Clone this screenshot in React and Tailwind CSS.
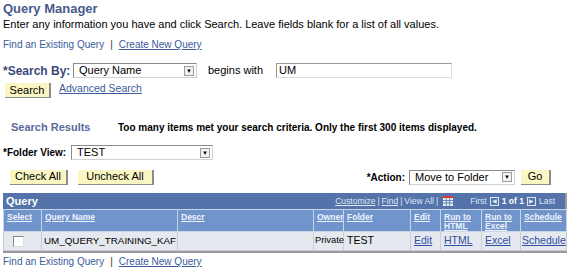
import React from 'react';

const font = { fontFamily: '"Liberation Sans", Arial, sans-serif' };

function Select({ value, width }) {
  return (
    <div
      className="flex items-center h-[15px] bg-white border border-[#8a8a8a] border-b-[#d0d0d0] border-r-[#d0d0d0] pl-[5px] pr-[2px]"
      style={{ width }}
    >
      <span className="flex-1 text-[11px] leading-[13px] text-black whitespace-nowrap">{value}</span>
      <span className="flex items-center justify-center w-[10px] h-[10px] border border-[#9a9a9a] bg-[#f4f4f4] text-[6px] leading-none text-black">
        ▼
      </span>
    </div>
  );
}

function Btn({ children, w }) {
  return (
    <div
      className="flex items-center justify-center h-[15px] bg-[#fbf7c4] border-r-2 border-b border-[#8c8c8c] text-[11px] leading-none text-black whitespace-nowrap"
      style={{ width: w }}
    >
      {children}
    </div>
  );
}

const cols = [
  { label: 'Select', w: 38 },
  { label: 'Query Name', w: 136 },
  { label: 'Descr', w: 136 },
  { label: 'Owner', w: 30 },
  { label: 'Folder', w: 67 },
  { label: 'Edit', w: 30 },
  { label: ['Run to', 'HTML'], w: 41 },
  { label: ['Run to', 'Excel'], w: 39 },
  { label: 'Schedule', w: 46 },
];

function Links() {
  return (
    <div className="text-[10px] leading-[13px] flex items-center">
      <span className="text-[#3b5a9a]">Find an Existing Query</span>
      <span className="mx-[6px] text-[#333]">|</span>
      <span className="text-[#3b5a9a] underline">Create New Query</span>
    </div>
  );
}

export default function App() {
  return (
    <div className="w-[570px] h-[268px] bg-white overflow-hidden text-black" style={font}>
      <div className="pl-[3px] pt-[1px]">
        <div className="text-[13px] leading-[15px] font-bold text-[#4b5a8c]">Query Manager</div>
        <div className="mt-[2px] text-[11px] leading-[13px]">
          Enter any information you have and click Search. Leave fields blank for a list of all values.
        </div>
        <div className="mt-[7px]">
          <Links />
        </div>

        <div className="mt-[11px] flex items-center h-[17px]">
          <span className="text-[12px] font-bold text-[#3b4a7c] w-[70px] whitespace-nowrap">*Search By:</span>
          <Select value="Query Name" width={124} />
          <span className="ml-[11px] text-[11px] w-[68px] whitespace-nowrap">begins with</span>
          <div className="w-[176px] h-[15px] border border-[#999] border-b-[#ddd] border-r-[#ddd] pl-[2px] text-[11px] leading-[13px]">
            UM
          </div>
        </div>

        <div className="mt-[3px] flex items-start h-[18px]">
          <div className="ml-[2px] mt-[1px]">
            <Btn w={46}>Search</Btn>
          </div>
          <span className="ml-[8px] text-[10.5px] leading-[12px] text-[#3b5a9a] underline">Advanced Search</span>
        </div>

        <div className="mt-[20px] flex items-center h-[14px]">
          <span className="ml-[8px] text-[11px] font-bold text-[#5b6a9c] w-[107px] whitespace-nowrap">Search Results</span>
          <span className="text-[10px] font-bold whitespace-nowrap">
            Too many items met your search criteria. Only the first 300 items displayed.
          </span>
        </div>

        <div className="mt-[11px] flex items-center h-[15px]">
          <span className="text-[10px] font-bold w-[68px] whitespace-nowrap">*Folder View:</span>
          <Select value="TEST" width={142} />
        </div>

        <div className="mt-[9px] flex items-center h-[16px]">
          <div className="ml-[7px]"><Btn w={58}>Check All</Btn></div>
          <div className="ml-[10px]"><Btn w={76}>Uncheck All</Btn></div>
          <span className="ml-auto text-[10px] font-bold mr-[4px]">*Action:</span>
          <Select value="Move to Folder" width={106} />
          <div className="ml-[6px] mr-[19px]"><Btn w={30}>Go</Btn></div>
        </div>
      </div>

      <div className="ml-[3px] mt-[8px] w-[564px] border-r-2 border-b-2 border-[#9a9a9a]">
        <div className="h-[16px] bg-[#5373aa] flex items-center pl-[3px] pr-[10px] text-white">
          <span className="text-[11px] font-bold">Query</span>
          <div className="ml-auto flex items-center text-[8.5px] text-[#dfe6f3]">
            <span className="underline">Customize</span>
            <span className="mx-[2px]">|</span>
            <span className="underline">Find</span>
            <span className="mx-[2px]">|</span>
            <span>View All</span>
            <span className="mx-[2px]">|</span>
            <svg width="10" height="10" viewBox="0 0 10 10" className="ml-[3px]">
              <rect x="0" y="0" width="10" height="10" fill="#e8eef8" />
              <rect x="0" y="0" width="10" height="2" fill="#d33" />
              <path d="M0 4.5H10M0 7H10M3.3 2V10M6.6 2V10" stroke="#4a6aa8" strokeWidth="0.8" />
            </svg>
            <span className="ml-[17px]">First</span>
            <span className="ml-[3px] w-[9px] h-[9px] border border-[#dfe6f3] flex items-center justify-center text-[6px] leading-none">◀</span>
            <span className="ml-[3px] font-bold text-white">1 of 1</span>
            <span className="ml-[3px] w-[9px] h-[9px] border border-[#dfe6f3] flex items-center justify-center text-[6px] leading-none">▶</span>
            <span className="ml-[3px]">Last</span>
          </div>
        </div>
        <table className="border-collapse" style={{ tableLayout: 'fixed', width: 562 }}>
          <colgroup>
            {cols.map((c, i) => (
              <col key={i} style={{ width: c.w }} />
            ))}
          </colgroup>
          <thead>
            <tr className="h-[22px] bg-[#7094cc]">
              {cols.map((c, i) => (
                <th
                  key={i}
                  className="border border-[#c8d4e8] text-left align-top pl-[3px] pt-[3px] text-[8.5px] leading-[9px] font-bold text-[#eef2fa] underline whitespace-nowrap overflow-hidden"
                >
                  {Array.isArray(c.label) ? (
                    <>
                      {c.label[0]}
                      <br />
                      {c.label[1]}
                    </>
                  ) : (
                    c.label
                  )}
                </th>
              ))}
            </tr>
          </thead>
          <tbody>
            <tr className="h-[19px] bg-[#e5e8ee] text-[10.5px] whitespace-nowrap">
              <td className="border border-[#c8ccd4] pl-[9px]">
                <div className="w-[11px] h-[11px] bg-white border border-[#888] border-b-[#ddd] border-r-[#ddd]" />
              </td>
              <td className="border border-[#c8ccd4] pl-[2px] text-[9.8px]">UM_QUERY_TRAINING_KAF</td>
              <td className="border border-[#c8ccd4]" />
              <td className="border border-[#c8ccd4] pl-[1px] text-[9.3px]">Private</td>
              <td className="border border-[#c8ccd4] pl-[3px]">TEST</td>
              <td className="border border-[#c8ccd4] pl-[3px] text-[#2f4fa0] underline">Edit</td>
              <td className="border border-[#c8ccd4] pl-[3px] text-[#2f4fa0] underline">HTML</td>
              <td className="border border-[#c8ccd4] pl-[3px] text-[#2f4fa0] underline">Excel</td>
              <td className="border border-[#c8ccd4] pl-[1px] text-[#2f4fa0] underline">Schedule</td>
            </tr>
          </tbody>
        </table>
      </div>

      <div className="mt-[2px] pl-[3px]">
        <Links />
      </div>
    </div>
  );
}
